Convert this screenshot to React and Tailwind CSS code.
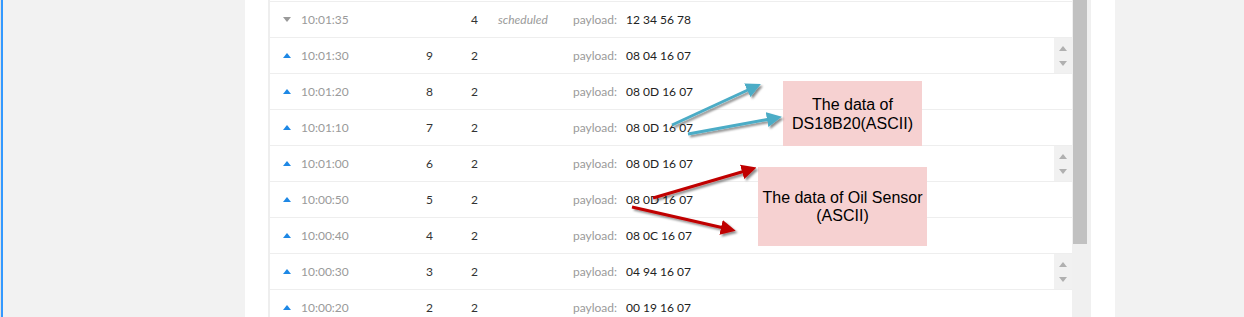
import React from 'react';

const rows = [
  { time: '10:01:35', a: '', b: '4', status: 'scheduled', value: '12 34 56 78', down: true },
  { time: '10:01:30', a: '9', b: '2', value: '08 04 16 07', spin: true },
  { time: '10:01:20', a: '8', b: '2', value: '08 0D 16 07' },
  { time: '10:01:10', a: '7', b: '2', value: '08 0D 16 07' },
  { time: '10:01:00', a: '6', b: '2', value: '08 0D 16 07', spin: true },
  { time: '10:00:50', a: '5', b: '2', value: '08 0D 16 07' },
  { time: '10:00:40', a: '4', b: '2', value: '08 0C 16 07' },
  { time: '10:00:30', a: '3', b: '2', value: '04 94 16 07', spin: true },
  { time: '10:00:20', a: '2', b: '2', value: '00 19 16 07' },
];

function Tri({ down, color }) {
  return (
    <svg width="8" height="5" viewBox="0 0 8 5" className="block">
      {down ? <path d="M0 0H8L4 5Z" fill={color} /> : <path d="M0 5H8L4 0Z" fill={color} />}
    </svg>
  );
}

function Row({ r }) {
  return (
    <div className="flex h-[36px] border-t border-[#eeeeee] items-center">
      <div className="w-[13px]" />
      <div className="w-[18px] flex items-center">
        <Tri down={r.down} color={r.down ? '#9a9a9a' : '#1e88e5'} />
      </div>
      <div className="w-[125px] text-[#9a9a9a]">{r.time}</div>
      <div className="w-[45px] text-[#333]">{r.a}</div>
      <div className="w-[27px] text-[#333]">{r.b}</div>
      <div className="w-[75px] italic text-[#9a9a9a]">{r.status || ''}</div>
      <div className="w-[53px] text-[#9a9a9a]">payload:</div>
      <div className="flex-1 text-[#222]">{r.value}</div>
      <div className={`w-[18px] h-full flex flex-col items-center justify-center gap-[10px] ${r.spin ? 'bg-[#f1f1f1]' : ''}`}>
        {r.spin && (
          <>
            <Tri color="#b0b0b0" />
            <Tri down color="#b0b0b0" />
          </>
        )}
      </div>
    </div>
  );
}

function Arrow({ x1, y1, x2, y2, color, id }) {
  return <line x1={x1} y1={y1} x2={x2} y2={y2} stroke={color} strokeWidth="3" markerEnd={`url(#${id})`} filter="url(#sh)" />;
}

export default function App() {
  return (
    <div className="relative flex w-[1244px] h-[317px] overflow-hidden bg-white" style={{ fontFamily: 'Lato, "Open Sans", sans-serif' }}>
      <div className="w-[1px] bg-[#e2e2e2]" />
      <div className="w-[2px] bg-[#3399ff]" />
      <div className="w-[242px] bg-[#f2f2f2]" />
      <div className="w-[23px] bg-white" />
      <div className="w-[804px] border-l-2 border-[#eeeeee] pt-[1px] text-[12px] bg-white">
        {rows.map((r, i) => (
          <Row key={i} r={r} />
        ))}
      </div>
      <div className="w-[19px] bg-[#f0f0f0] flex flex-col">
        <div className="ml-[1px] w-[14px] h-[244px] bg-[#c1c1c1]" />
      </div>
      <div className="w-[24px] bg-white" />
      <div className="flex-1 bg-[#f2f2f2]" />

      <div className="absolute left-[783px] top-[81px] w-[139px] h-[65px] bg-[#f6d1d1] flex items-center justify-center text-center text-[16px] leading-[19px] text-black" style={{ fontFamily: '"Liberation Sans", Arial, sans-serif' }}>
        The data of<br />DS18B20(ASCII)
      </div>
      <div className="absolute left-[758px] top-[167px] w-[169px] h-[79px] bg-[#f6d1d1] flex items-center justify-center text-center text-[16px] leading-[18px] text-black" style={{ fontFamily: '"Liberation Sans", Arial, sans-serif' }}>
        The data of Oil Sensor<br />(ASCII)
      </div>

      <svg className="absolute left-0 top-0 pointer-events-none" width="1244" height="317">
        <defs>
          <filter id="sh" x="-20%" y="-50%" width="140%" height="200%">
            <feDropShadow dx="2" dy="2" stdDeviation="1.2" floodColor="#000" floodOpacity="0.45" />
          </filter>
          <marker id="hb" markerWidth="5" markerHeight="5" refX="1" refY="2.5" orient="auto" markerUnits="strokeWidth">
            <path d="M0 0L5 2.5L0 5Z" fill="#4bacc6" />
          </marker>
          <marker id="hr" markerWidth="5" markerHeight="5" refX="1" refY="2.5" orient="auto" markerUnits="strokeWidth">
            <path d="M0 0L5 2.5L0 5Z" fill="#c00000" />
          </marker>
        </defs>
        <Arrow x1={672} y1={125} x2={750} y2={89} color="#4bacc6" id="hb" />
        <Arrow x1={688} y1={134} x2={770} y2={119} color="#4bacc6" id="hb" />
        <Arrow x1={653} y1={198} x2={745} y2={171} color="#c00000" id="hr" />
        <Arrow x1={632} y1={207} x2={724} y2={228} color="#c00000" id="hr" />
      </svg>
    </div>
  );
}
